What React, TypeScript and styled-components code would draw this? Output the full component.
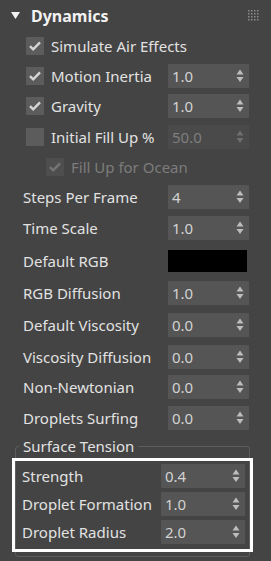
import styled, { createGlobalStyle } from "styled-components";

const GlobalStyle = createGlobalStyle`
  html, body {
    margin: 0;
    padding: 0;
    background: #444444;
  }
  body {
    font-family: "Noto Sans", "DejaVu Sans", sans-serif;
  }
`;

const Panel = styled.div`
  width: 271px;
  height: 561px;
  box-sizing: border-box;
  background: #444444;
  overflow: hidden;
  display: flex;
  flex-direction: column;
`;

const Header = styled.div`
  height: 31px;
  display: flex;
  align-items: center;
  padding-left: 11px;
  flex-shrink: 0;
`;

const Title = styled.span`
  margin-left: 11px;
  font-size: 16px;
  font-weight: 700;
  color: #f2f2f2;
`;

const Grip = styled.svg`
  margin-left: auto;
  margin-right: 12px;
`;

const Row = styled.div<{ $h: number; $indent: number }>`
  height: ${(p) => p.$h}px;
  display: flex;
  align-items: center;
  padding-left: ${(p) => p.$indent}px;
  flex-shrink: 0;
`;

const Box = styled.div<{ $disabled?: boolean }>`
  width: 18px;
  height: 18px;
  background: ${(p) => (p.$disabled ? "#4e4e4e" : "#5c5c5c")};
  display: flex;
  align-items: center;
  justify-content: center;
  margin-right: 7px;
`;

const Label = styled.span<{ $disabled?: boolean }>`
  flex: 1;
  font-size: 15px;
  color: ${(p) => (p.$disabled ? "#7c7c7c" : "#e2e2e2")};
  white-space: nowrap;
`;

const SpinBox = styled.div<{ $w: number; $disabled?: boolean }>`
  width: ${(p) => p.$w}px;
  height: 24px;
  box-sizing: border-box;
  background: ${(p) => (p.$disabled ? "#4a4a4a" : "#555555")};
  display: flex;
  align-items: center;
  padding: 0 5px 0 4px;
  font-size: 15px;
  color: ${(p) => (p.$disabled ? "#7e7e7e" : "#d2d2d2")};
`;

const SpinValue = styled.span`
  flex: 1;
`;

const Swatch = styled.div`
  width: 79px;
  height: 22px;
  background: #000;
  margin-right: 24px;
`;

const Group = styled.fieldset`
  margin: 3px 21px 0 15px;
  padding: 0 0 4px;
  border: 1px solid #5d5d5d;
  border-radius: 3px;
  min-width: 0;
`;

const Legend = styled.legend`
  margin-left: 3px;
  padding: 0 4px;
  font-size: 15px;
  line-height: 20px;
  color: #e2e2e2;
`;

const Highlight = styled.div`
  margin: 8px -1px 3px;
  outline: 3px solid #ffffff;
  position: relative;
  padding-bottom: 3px;
`;

const Rows = styled.div`
  margin-top: -3px;
`;

function Check({ dim }: { dim?: boolean }) {
  return (
    <svg width="14" height="12" viewBox="0 0 14 12">
      <path
        d="M2 6.2 L5.2 9.4 L12 2.4"
        fill="none"
        stroke={dim ? "#757575" : "#d6d6d6"}
        strokeWidth="2.4"
      />
    </svg>
  );
}

function Arrows({ dim }: { dim?: boolean }) {
  const c = dim ? "#6e6e6e" : "#bdbdbd";
  return (
    <svg width="8" height="14" viewBox="0 0 8 14">
      <path d="M4 0.5 L7.5 5.5 L0.5 5.5 Z" fill={c} />
      <path d="M0.5 8 L7.5 8 L4 13 Z" fill={c} />
    </svg>
  );
}

function Spinner({ value, w = 81, disabled, gap = 22 }: { value: string; w?: number; disabled?: boolean; gap?: number }) {
  return (
    <SpinBox $w={w} $disabled={disabled} style={{ marginRight: gap }}>
      <SpinValue>{value}</SpinValue>
      <Arrows dim={disabled} />
    </SpinBox>
  );
}

const fields: [string, string, number][] = [
  ["Steps Per Frame", "4", 31],
  ["Time Scale", "1.0", 32],
  ["Default RGB", "", 33],
  ["RGB Diffusion", "1.0", 32],
  ["Default Viscosity", "0.0", 32],
  ["Viscosity Diffusion", "0.0", 31],
  ["Non-Newtonian", "0.0", 30],
  ["Droplets Surfing", "0.0", 31],
];

const tension: [string, string, number][] = [
  ["Strength", "0.4", 29],
  ["Droplet Formation", "1.0", 28],
  ["Droplet Radius", "2.0", 28],
];

export default function App() {
  return (
    <Panel>
      <GlobalStyle />
      <Header>
        <svg width="9" height="7" viewBox="0 0 9 7">
          <path d="M0 0 L9 0 L4.5 7 Z" fill="#f2f2f2" />
        </svg>
        <Title>Dynamics</Title>
        <Grip width="11" height="11" viewBox="0 0 11 11">
          {[0, 1, 2, 3].map((r) =>
            [0, 1, 2, 3].map((c) => (
              <rect key={r + "-" + c} x={c * 3} y={r * 3} width="1.5" height="1.5" fill="#8a8a8a" />
            ))
          )}
        </Grip>
      </Header>

      <Row $h={30} $indent={26}>
        <Box>
          <Check />
        </Box>
        <Label>Simulate Air Effects</Label>
      </Row>
      <Row $h={30} $indent={26}>
        <Box>
          <Check />
        </Box>
        <Label>Motion Inertia</Label>
        <Spinner value="1.0" />
      </Row>
      <Row $h={30} $indent={26}>
        <Box>
          <Check />
        </Box>
        <Label>Gravity</Label>
        <Spinner value="1.0" />
      </Row>
      <Row $h={32} $indent={26}>
        <Box />
        <Label>Initial Fill Up %</Label>
        <Spinner value="50.0" disabled />
      </Row>
      <Row $h={28} $indent={46}>
        <Box $disabled>
          <Check dim />
        </Box>
        <Label $disabled>Fill Up for Ocean</Label>
      </Row>

      {fields.map(([name, value, h]) => (
        <Row key={name} $h={h} $indent={23}>
          <Label>{name}</Label>
          {value ? <Spinner value={value} /> : <Swatch />}
        </Row>
      ))}

      <Group>
        <Legend>Surface Tension</Legend>
        <Highlight>
          <Rows>
            {tension.map(([name, value, h]) => (
              <Row key={name} $h={h} $indent={7}>
                <Label>{name}</Label>
                <Spinner value={value} w={84} gap={5} />
              </Row>
            ))}
          </Rows>
        </Highlight>
      </Group>
    </Panel>
  );
}
